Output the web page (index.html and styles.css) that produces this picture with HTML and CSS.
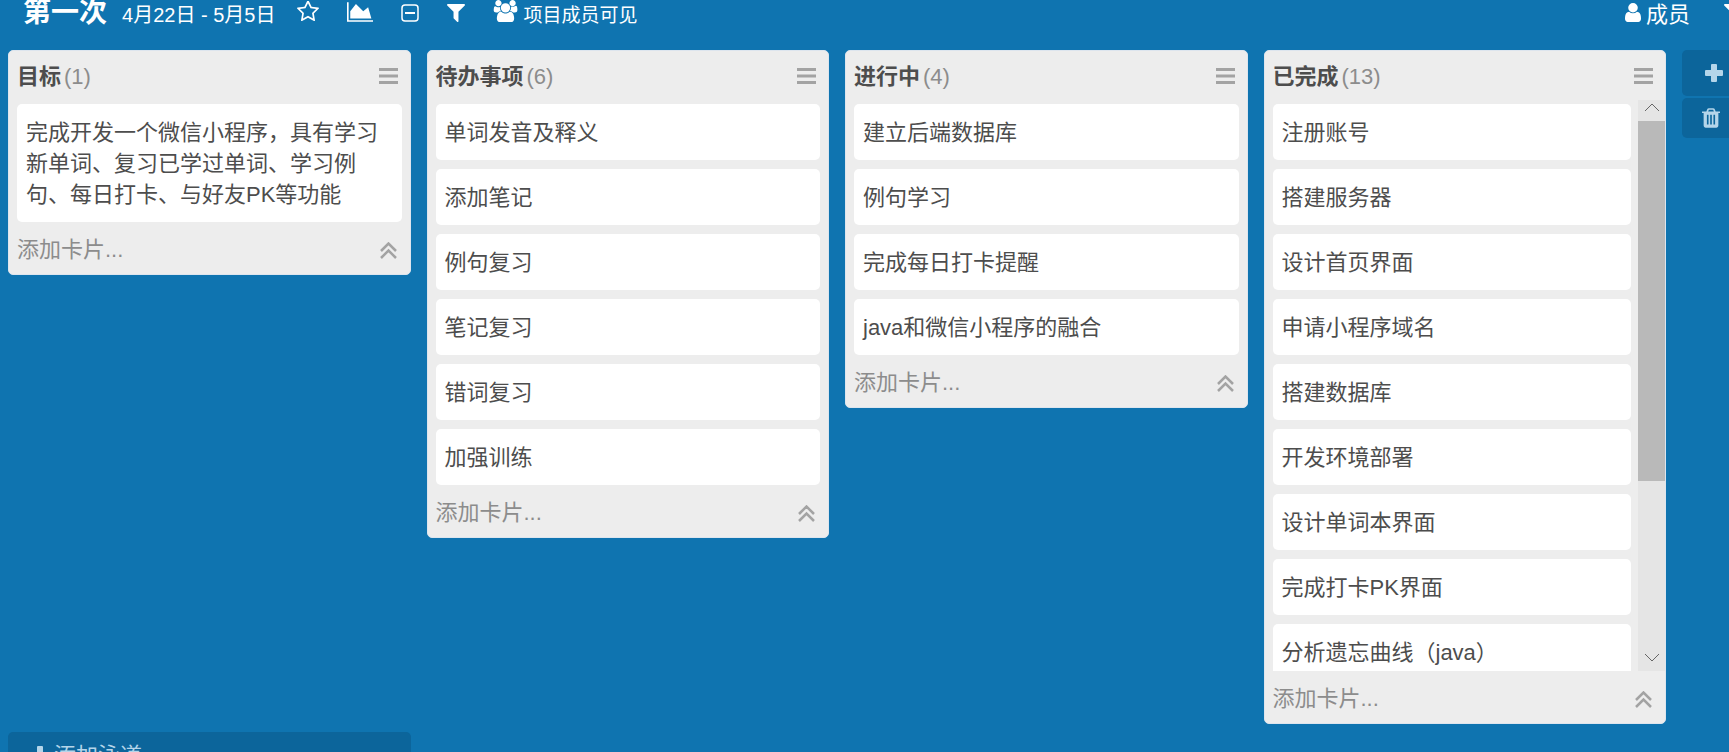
FILE: index.html
```html
<!DOCTYPE html>
<html lang="zh-CN">
<head>
    <meta charset="UTF-8">
    <meta name="viewport" content="width=device-width, initial-scale=1.0">
    <title>第一次</title>
    <link rel="stylesheet" href="styles.css">
</head>
<body>
    <svg class="sprite" aria-hidden="true">
        <symbol id="bars" viewBox="0 0 19 16">
            <path d="M0 0h19v3H0zM0 6.500h19v3H0zM0 13h19v3H0z"/>
        </symbol>
        <symbol id="up" viewBox="0 0 17 17">
            <path d="M1 9l7.500-7.500L16 9M1 16l7.500-7.500L16 16" fill="none" stroke="currentColor" stroke-width="2.500"/>
        </symbol>
        <symbol id="plus" viewBox="0 0 18 18">
            <path d="M7 0h4q1 0 1 1v5h5q1 0 1 1v4q0 1-1 1h-5v5q0 1-1 1H7q-1 0-1-1v-5H1q-1 0-1-1V7q0-1 1-1h5V1q0-1 1-1z"/>
        </symbol>
    </svg>

    <header class="topbar">
        <h1 class="board-title">第一次</h1>
        <span class="board-dates">4月22日 - 5月5日</span>
        <button class="icon-btn" aria-label="收藏">
            <svg width="22" height="21" viewBox="0 128 1664 1536"><path d="M1137 1004l306-297-422-62-189-382-189 382-422 62 306 297-73 421 378-199 377 199zm527-357q0 22-26 48l-363 354 86 500q1 7 1 20 0 50-41 50-19 0-40-12l-449-236-449 236q-22 12-40 12-21 0-31.500-14.500t-10.500-35.500q0-6 2-20l86-500-364-354q-25-27-25-48 0-37 56-46l502-73 225-455q19-41 49-41t49 41l225 455 502 73q56 9 56 46z"/></svg>
        </button>
        <button class="icon-btn" aria-label="统计">
            <svg width="26" height="20" viewBox="0 128 2048 1536"><path d="M2048 1536v128h-2048v-1536h128v1408h1920zm-384-1024l256 896h-1664v-576l448-576 576 576z"/></svg>
        </button>
        <button class="icon-btn" aria-label="折叠">
            <svg width="18" height="18" viewBox="0 0 18 18"><rect x="1" y="1" width="16" height="16" rx="3" fill="none" stroke="currentColor" stroke-width="1.500"/><path d="M4 8h10v2H4z"/></svg>
        </button>
        <button class="icon-btn" aria-label="筛选">
            <svg width="18" height="18" viewBox="192 256 1408 1408"><path d="M1595 295q17 41-14 70l-493 493v742q0 42-39 59-13 5-25 5-27 0-45-19l-256-256q-19-19-19-45v-486l-493-493q-31-29-14-70 17-39 59-39h1280q42 0 59 39z"/></svg>
        </button>
        <button class="icon-btn visibility">
            <svg width="25" height="22" viewBox="64 0 1920 1792"><path d="M657 896q-162 5-265 128h-134q-82 0-138-40.500t-56-118.500q0-353 124-353 6 0 43.500 21t97.500 42.500 119 21.500q67 0 133-23-5 37-5 66 0 159 90 299zm1071 637q0 120-73 189.500t-194 69.500h-874q-121 0-194-69.500t-73-189.500q0-53 3.500-103.500t14-109 26.500-108.500 43-97.500 62-81 85.500-53.500 111.500-20q10 0 43 21.500t73 48 107 48 135 21.500 135-21.500 107-48 73-48 43-21.500q61 0 111.500 20t85.500 53.500 62 81 43 97.500 26.500 108.500 14 109 3.500 103.500zm-1024-1277q0 106-75 181t-181 75-181-75-75-181 75-181 181-75 181 75 75 181zm704 384q0 159-112.500 271.500t-271.500 112.500-271.500-112.500-112.500-271.500 112.500-271.500 271.500-112.500 271.500 112.500 112.500 271.500zm576 225q0 78-56 118.500t-138 40.500h-134q-103-123-265-128 90-140 90-299 0-29-5-66 66 23 133 23 59 0 119-21.500t97.500-42.500 43.500-21q124 0 124 353zm-128-609q0 106-75 181t-181 75-181-75-75-181 75-181 181-75 181 75 75 181z"/></svg>
            <span>项目成员可见</span>
        </button>
        <button class="icon-btn members">
            <svg width="16" height="19" viewBox="256 128 1280 1536" preserveAspectRatio="none"><path d="M1536 1399q0 109-62.500 187t-150.500 78h-854q-88 0-150.500-78t-62.500-187q0-85 8.500-160.500t31.500-152 58.500-131 94-89 134.500-34.500q131 128 313 128t313-128q76 0 134.500 34.500t94 89 58.500 131 31.500 152 8.500 160.500zm-256-887q0 159-112.500 271.500t-271.500 112.500-271.500-112.500-112.500-271.500 112.500-271.500 271.500-112.500 271.500 112.500 112.500 271.500z"/></svg>
            <span>成员</span>
        </button>
        <button class="icon-btn more" aria-label="更多">
            <svg width="18" height="18" viewBox="192 256 1408 1408"><path d="M1595 295q17 41-14 70l-493 493v742q0 42-39 59-13 5-25 5-27 0-45-19l-256-256q-19-19-19-45v-486l-493-493q-31-29-14-70 17-39 59-39h1280q42 0 59 39z"/></svg>
        </button>
    </header>

    <main class="board">
        <section class="list">
            <div class="list-header">
                <h2>目标</h2><span class="count">(1)</span>
                <button class="list-menu" aria-label="菜单"><svg width="19" height="16"><use href="#bars"/></svg></button>
            </div>
            <div class="list-body">
                <div class="cards">
                    <div class="card">完成开发一个微信小程序，具有学习新单词、复习已学过单词、学习例句、每日打卡、与好友PK等功能</div>
                </div>
            </div>
            <div class="list-footer">
                <button class="add-card">添加卡片...</button>
                <button class="collapse" aria-label="收起"><svg width="17" height="17"><use href="#up"/></svg></button>
            </div>
        </section>

        <section class="list">
            <div class="list-header">
                <h2>待办事项</h2><span class="count">(6)</span>
                <button class="list-menu" aria-label="菜单"><svg width="19" height="16"><use href="#bars"/></svg></button>
            </div>
            <div class="list-body">
                <div class="cards">
                    <div class="card">单词发音及释义</div>
                    <div class="card">添加笔记</div>
                    <div class="card">例句复习</div>
                    <div class="card">笔记复习</div>
                    <div class="card">错词复习</div>
                    <div class="card">加强训练</div>
                </div>
            </div>
            <div class="list-footer">
                <button class="add-card">添加卡片...</button>
                <button class="collapse" aria-label="收起"><svg width="17" height="17"><use href="#up"/></svg></button>
            </div>
        </section>

        <section class="list">
            <div class="list-header">
                <h2>进行中</h2><span class="count">(4)</span>
                <button class="list-menu" aria-label="菜单"><svg width="19" height="16"><use href="#bars"/></svg></button>
            </div>
            <div class="list-body">
                <div class="cards">
                    <div class="card">建立后端数据库</div>
                    <div class="card">例句学习</div>
                    <div class="card">完成每日打卡提醒</div>
                    <div class="card">java和微信小程序的融合</div>
                </div>
            </div>
            <div class="list-footer">
                <button class="add-card">添加卡片...</button>
                <button class="collapse" aria-label="收起"><svg width="17" height="17"><use href="#up"/></svg></button>
            </div>
        </section>

        <section class="list">
            <div class="list-header">
                <h2>已完成</h2><span class="count">(13)</span>
                <button class="list-menu" aria-label="菜单"><svg width="19" height="16"><use href="#bars"/></svg></button>
            </div>
            <div class="list-body scrolling">
                <div class="cards">
                    <div class="card">注册账号</div>
                    <div class="card">搭建服务器</div>
                    <div class="card">设计首页界面</div>
                    <div class="card">申请小程序域名</div>
                    <div class="card">搭建数据库</div>
                    <div class="card">开发环境部署</div>
                    <div class="card">设计单词本界面</div>
                    <div class="card">完成打卡PK界面</div>
                    <div class="card">分析遗忘曲线（java）</div>
                </div>
                <div class="scrollbar">
                    <svg width="27" height="21" viewBox="0 0 27 21"><path d="M7 11l7-7 7 7"/></svg>
                    <div class="thumb"></div>
                    <svg width="27" height="21" viewBox="0 0 27 21"><path d="M7 4l7 7 7-7"/></svg>
                </div>
            </div>
            <div class="list-footer">
                <button class="add-card">添加卡片...</button>
                <button class="collapse" aria-label="收起"><svg width="17" height="17"><use href="#up"/></svg></button>
            </div>
        </section>

        <aside class="side">
            <button class="side-btn add-list" aria-label="添加列表"><svg width="18" height="18"><use href="#plus"/></svg></button>
            <button class="side-btn" aria-label="回收站">
                <svg width="18" height="20" viewBox="192 128 1408 1536"><path d="M704 1376v-704q0-14-9-23t-23-9h-64q-14 0-23 9t-9 23v704q0 14 9 23t23 9h64q14 0 23-9t9-23zm256 0v-704q0-14-9-23t-23-9h-64q-14 0-23 9t-9 23v704q0 14 9 23t23 9h64q14 0 23-9t9-23zm256 0v-704q0-14-9-23t-23-9h-64q-14 0-23 9t-9 23v704q0 14 9 23t23 9h64q14 0 23-9t9-23zm-544-992h448l-48-117q-7-9-17-11h-317q-10 2-17 11zm928 32v64q0 14-9 23t-23 9h-96v948q0 83-47 143.500t-113 60.500h-832q-66 0-113-58.500t-47-141.500v-952h-96q-14 0-23-9t-9-23v-64q0-14 9-23t23-9h309l70-167q15-37 54-63t79-26h320q40 0 79 26t54 63l70 167h309q14 0 23 9t9 23z"/></svg>
            </button>
        </aside>
    </main>

    <footer class="lanes">
        <button class="add-lane"><svg width="18" height="18"><use href="#plus"/></svg>添加泳道</button>
    </footer>
</body>
</html>
```

FILE: styles.css
```css
:root {
    --board-bg: #0f74b0;
    --button-bg: #0c659b;
    --button-fg: #b4d5ea;
    --list-bg: #ededed;
    --side-width: 47px;
    --gap: 16px;
}

* {
    box-sizing: border-box;
    margin: 0;
    padding: 0;
}

body {
    height: 100vh;
    overflow: hidden;
    display: flex;
    flex-direction: column;
    background-color: var(--board-bg);
    font-family: "Liberation Sans", "Noto Sans CJK SC", sans-serif;
    font-size: 22px;
    line-height: 31px;
    color: #4d4d4d;
}

button {
    border: none;
    background: none;
    color: inherit;
    font: inherit;
    cursor: pointer;
}

svg {
    display: block;
    flex: none;
    fill: currentColor;
}

.sprite {
    position: absolute;
    width: 0;
    height: 0;
}

/* top bar */
.topbar {
    flex: none;
    display: flex;
    align-items: baseline;
    height: 50px;
    padding-left: 23px;
    color: #fff;
    overflow: hidden;
}

.board-title {
    font-size: 28px;
    line-height: 22px;
    margin-right: 15px;
}

.board-dates {
    font-size: 20px;
    line-height: 22px;
    margin-right: 22px;
}

.icon-btn {
    flex: none;
    display: flex;
    align-items: baseline;
    line-height: 22px;
    margin-right: 28px;
}

.visibility {
    gap: 5px;
    font-size: 19px;
}

.members {
    gap: 5px;
    margin-left: auto;
    margin-right: 34px;
}

.more {
    margin-right: -13px;
}

/* board */
.board {
    flex: 1;
    min-height: 0;
    display: flex;
    align-items: flex-start;
    gap: var(--gap);
    padding-left: 8px;
}

.list {
    flex: 1;
    min-width: 0;
    max-height: 100%;
    display: flex;
    flex-direction: column;
    background-color: var(--list-bg);
    border: 1px solid #dde5ee;
    border-radius: 5px;
}

.list-header {
    flex: none;
    display: flex;
    align-items: center;
    height: 49px;
    padding: 1px 12px 0 8px;
}

.list-header h2 {
    font-size: 22px;
}

.count {
    margin-left: 3px;
    color: #8c8c8c;
}

.list-menu,
.collapse {
    margin-left: auto;
    color: #a3a3a3;
}

.list-body {
    display: flex;
    min-height: 0;
    overflow: hidden;
}

.cards {
    flex: 1;
    display: flex;
    flex-direction: column;
    gap: 9px;
    padding: 4px 8px 0;
}

.card {
    flex: none;
    padding: 13px 9px 12px;
    background-color: #fff;
    border-radius: 5px;
}

.scrolling .cards {
    padding-right: 7px;
}

.scrollbar {
    flex: none;
    display: flex;
    flex-direction: column;
    background-color: #e5e5e5;
}

.scrollbar svg {
    fill: none;
    stroke: #666;
}

.thumb {
    height: 63%;
    margin-bottom: auto;
    background-color: #b9b9b9;
}

.list-footer {
    flex: none;
    display: flex;
    align-items: center;
    height: 52px;
    padding: 3px 13px 0 8px;
}

.collapse {
    padding-top: 2px;
}

.add-card {
    color: #8c8c8c;
}

/* right-hand buttons */
.side {
    flex: none;
    width: var(--side-width);
    display: flex;
    flex-direction: column;
    gap: 2px;
}

.side-btn {
    height: 40px;
    padding-left: 20px;
    background-color: var(--button-bg);
    color: var(--button-fg);
    border-radius: 5px 0 0 5px;
}

.add-list {
    height: 46px;
    padding-left: 23px;
}

/* swimlanes */
.lanes {
    flex: none;
    display: flex;
    height: 20px;
    margin-top: 8px;
    padding: 0 var(--side-width) 0 8px;
}

.add-lane {
    flex: none;
    display: flex;
    align-items: center;
    gap: 5px;
    width: calc(25% - var(--gap));
    height: 46px;
    padding-left: 23px;
    background-color: var(--button-bg);
    color: var(--button-fg);
    border-radius: 5px;
}
```
